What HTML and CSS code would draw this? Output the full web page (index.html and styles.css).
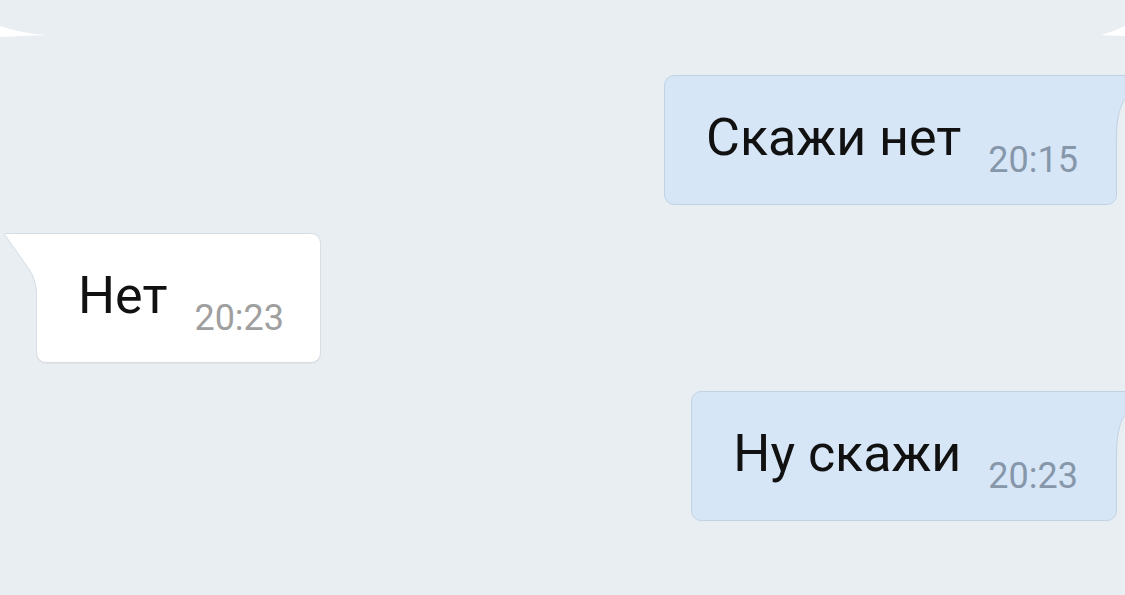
FILE: index.html
```html
<!DOCTYPE html>
<html lang="ru">
<head>
  <meta charset="UTF-8" />
  <meta name="viewport" content="width=device-width, initial-scale=1.0"/>
  <title>Скажи нет</title>
  <link rel="stylesheet" href="styles.css">
</head>
<body>
  <div class="edges">
    <svg class="edge" width="48" height="12" viewBox="0 0 48 12"><path d="M0 0 Q20 7 46 9 L0 11 Z" fill="#fff"/></svg>
    <svg class="edge" width="24" height="12" viewBox="0 0 24 12"><path d="M24 0 Q12 6 0 9 L24 10 Z" fill="#fff"/></svg>
  </div>

  <div class="chat">
    <div class="msg out">
      <div class="bubble">
        <svg class="tail" width="12" height="70" viewBox="0 0 12 70">
          <path d="M0 0 H12 V22 C6 27 1.5 42 1.5 62 V70 H0 Z" fill="#d7e6f7"/>
          <path d="M0 0.5 H12 M12 22 C6 27 1.5 42 1.5 62 V70" fill="none" stroke="#c3d2e2"/>
        </svg>
        <span class="text">Скажи нет</span>
        <span class="time">20:15</span>
      </div>
    </div>

    <div class="msg in">
      <div class="bubble">
        <svg class="tail" width="35" height="70" viewBox="0 0 35 70">
          <path d="M35 0 H3 Q1 0 1.8 1.6 L26 36 Q33.5 47 33.5 62 V70 H35 Z" fill="#fff"/>
          <path d="M35 0.5 H3 Q1 0.5 1.8 2 L26 36 Q33.5 47 33.5 62 V70" fill="none" stroke="#d6dde5"/>
        </svg>
        <span class="text">Нет</span>
        <span class="time">20:23</span>
      </div>
    </div>

    <div class="msg out">
      <div class="bubble">
        <svg class="tail" width="12" height="70" viewBox="0 0 12 70">
          <path d="M0 0 H12 V22 C6 27 1.5 42 1.5 62 V70 H0 Z" fill="#d7e6f7"/>
          <path d="M0 0.5 H12 M12 22 C6 27 1.5 42 1.5 62 V70" fill="none" stroke="#c3d2e2"/>
        </svg>
        <span class="text">Ну скажи</span>
        <span class="time">20:23</span>
      </div>
    </div>
  </div>
</body>
</html>
```

FILE: styles.css
```css
html, body {
  overflow: hidden;
}

body {
  margin: 0;
  background-color: #e9eef3;
  font-family: 'Roboto', 'Noto Sans', sans-serif;
  color: #111;
}

.edges {
  height: 40px;
  display: flex;
  justify-content: space-between;
  align-items: flex-end;
}

.edge {
  display: block;
  margin-bottom: 2px;
}

.chat {
  display: flex;
  flex-direction: column;
  gap: 28px;
  padding: 35px 8px 0 36px;
}

.msg {
  display: flex;
}

.msg.out {
  justify-content: flex-end;
}

.bubble {
  position: relative;
  display: flex;
  align-items: flex-start;
  gap: 27px;
  padding: 36px 38px 26px 41px;
  border: 1px solid;
  border-radius: 10px;
}

.out .bubble {
  background-color: #d7e6f7;
  border-color: #c3d2e2;
  border-top-right-radius: 0;
}

.in .bubble {
  padding-right: 36px;
  background-color: #fff;
  border-color: #d6dde5;
  border-top-left-radius: 0;
  box-shadow: 0 1px 0 #dfe3e6;
}

.tail {
  position: absolute;
  top: -1px;
  display: block;
}

.out .tail {
  left: calc(100% - 1px);
}

.in .tail {
  left: -34px;
}

.text {
  font-size: 52px;
  line-height: 1;
}

.time {
  font-size: 36px;
  line-height: 1;
  margin-top: 30px;
}

.out .time {
  color: #8797aa;
}

.in .time {
  color: #9f9f9f;
}
```
